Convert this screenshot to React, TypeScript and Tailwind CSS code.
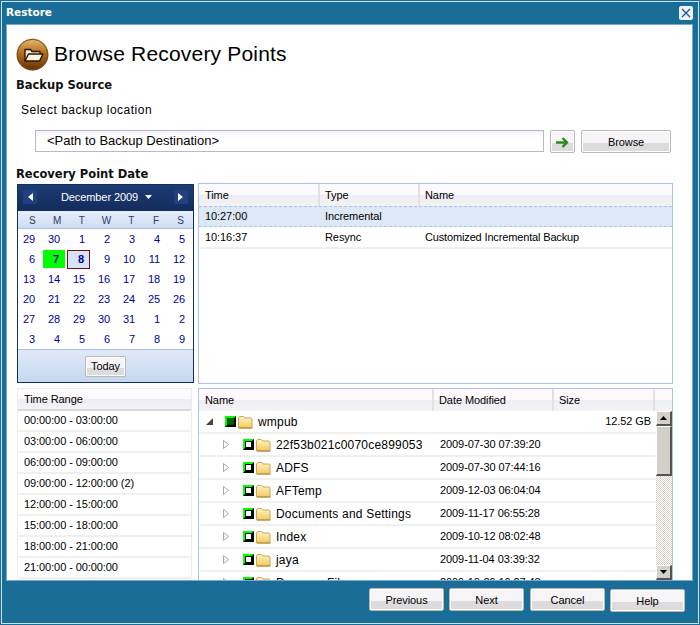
const btn =
  "rounded-[2px] border border-[#b9b9b9] bg-[linear-gradient(to_bottom,#f7f4f7_0,#f7f4f7_58%,#dcdcdc_58%,#dcdcdc_100%)] shadow-[inset_0_0_0_1px_#fff] text-[11px] text-black flex items-center justify-center pt-px"

const calendarDays = [
  [29, 30, 1, 2, 3, 4, 5],
  [6, 7, 8, 9, 10, 11, 12],
  [13, 14, 15, 16, 17, 18, 19],
  [20, 21, 22, 23, 24, 25, 26],
  [27, 28, 29, 30, 31, 1, 2],
  [3, 4, 5, 6, 7, 8, 9],
]

const timeRanges = [
  "00:00:00 - 03:00:00",
  "03:00:00 - 06:00:00",
  "06:00:00 - 09:00:00",
  "09:00:00 - 12:00:00 (2)",
  "12:00:00 - 15:00:00",
  "15:00:00 - 18:00:00",
  "18:00:00 - 21:00:00",
  "21:00:00 - 00:00:00",
]

const files = [
  { name: "22f53b021c0070ce899053", date: "2009-07-30 07:39:20" },
  { name: "ADFS", date: "2009-07-30 07:44:16" },
  { name: "AFTemp", date: "2009-12-03 06:04:04" },
  { name: "Documents and Settings", date: "2009-11-17 06:55:28" },
  { name: "Index", date: "2009-10-12 08:02:48" },
  { name: "jaya", date: "2009-11-04 03:39:32" },
  { name: "Program Files", date: "2009-10-29 10:27:48" },
]

const HeadCell = ({ label, className }: { label: string; className: string }) => (
  <div className={`flex h-full items-center border-r-2 border-[#e2e0e4] pl-[6px] ${className}`}>{label}</div>
)

const headBg = "bg-[linear-gradient(to_bottom,#fdfbfe_0,#fbf9fc_50%,#eeedf1_50%,#f3f2f5_100%)]"

const BrowseIcon = () => (
  <svg width="33" height="33" viewBox="0 0 33 33" className="shrink-0">
    <defs>
      <linearGradient id="orb" x1="0" y1="0" x2="0" y2="1">
        <stop offset="0" stopColor="#e9b877" />
        <stop offset="0.45" stopColor="#b36f1e" />
        <stop offset="1" stopColor="#5f3005" />
      </linearGradient>
    </defs>
    <circle cx="16.5" cy="16.5" r="16" fill="url(#orb)" />
    <circle cx="16.5" cy="16.5" r="15.2" fill="none" stroke="#7c4a12" strokeWidth="1" />
    <path d="M9 23V11.5h5.5l1.5 2h8v3" fill="#f5e9d2" stroke="#2b1603" strokeWidth="1.4" strokeLinejoin="round" />
    <path d="M9 23l3.5-7h14.5l-3.5 7z" fill="#fbf2e0" stroke="#2b1603" strokeWidth="1.4" strokeLinejoin="round" />
  </svg>
)

const Folder = () => (
  <svg width="16" height="14" viewBox="0 0 16 14" className="shrink-0">
    <defs>
      <linearGradient id="fold" x1="0" y1="0" x2="0" y2="1">
        <stop offset="0" stopColor="#fff3c4" />
        <stop offset="1" stopColor="#f5c95a" />
      </linearGradient>
    </defs>
    <path d="M1.5 13V3l1-1.5h4L8 3h6l1 1v9z" fill="url(#fold)" stroke="#c9a65a" strokeWidth="1" />
    <path d="M2 13h13.5" stroke="#a8873f" strokeWidth="1" />
  </svg>
)

const CheckBox = ({ solid }: { solid?: boolean }) => (
  <div className="flex h-[11px] w-[11px] shrink-0 items-center justify-center border-2 border-t-[#00ff00] border-r-black border-b-black border-l-[#00ff00] bg-[#00ff00]">
    <div className={`h-[7px] w-[7px] border ${solid ? "border-[#004d00] bg-[#006400]" : "border-black bg-white"}`} />
  </div>
)

const CalArrow = ({ dir }: { dir: "left" | "right" }) => (
  <div className="flex h-[14px] w-[14px] items-center justify-center rounded-[2px] bg-[#22407f]">
    <svg width="5" height="8" viewBox="0 0 5 8">
      <path d={dir === "left" ? "M5 0v8L0 4z" : "M0 0v8l5-4z"} fill="#fff" />
    </svg>
  </div>
)

const Calendar = () => (
  <div className="flex h-[199px] w-[177px] flex-col border border-[#12305f] text-[11px]">
    <div className="flex h-[26px] items-center justify-between bg-[linear-gradient(to_bottom,#1d3b74,#142c5c)] px-[5px] pb-[2px] text-white">
      <CalArrow dir="left" />
      <div className="flex items-center gap-[7px] pl-[2px]">
        December 2009
        <svg width="7" height="4" viewBox="0 0 7 4"><path d="M0 0h7L3.5 4z" fill="#fff" /></svg>
      </div>
      <CalArrow dir="right" />
    </div>
    <div className="grid h-[18px] grid-cols-7 items-center border-b border-[#a9c0e4] bg-[linear-gradient(to_bottom,#e6eefa,#cfdcf2)] pt-px pl-[2px] text-center text-[10px] text-[#2c3e5c]">
      {["S", "M", "T", "W", "T", "F", "S"].map((d, i) => (
        <div key={i}>{d}</div>
      ))}
    </div>
    <div className="grid flex-1 grid-cols-7 grid-rows-6 bg-white text-[#00009c]">
      {calendarDays.flat().map((d, i) =>
        i === 8 ? (
          <div key={i} className="flex items-center">
            <div className="flex h-[18px] w-[22px] items-center justify-end bg-[#00ff00] pr-[6px] font-bold">{d}</div>
          </div>
        ) : i === 9 ? (
          <div key={i} className="flex items-center">
            <div className="-ml-px flex h-[19px] w-[23px] items-center justify-end border border-[#7b0a0a] bg-[#d7e2f5] pr-[5px] font-bold">{d}</div>
          </div>
        ) : (
          <div key={i} className="flex items-center justify-end pr-[8px]">{d}</div>
        )
      )}
    </div>
    <div className="flex h-[33px] items-center justify-center border-t border-[#a9c0e4] bg-[linear-gradient(to_bottom,#e0e9f9,#c5d8ef)]">
      <div className={`${btn} h-[21px] w-[41px]`}>Today</div>
    </div>
  </div>
)

const FileRow = ({ name, date }: { name: string; date: string }) => (
  <div className="flex h-[23px] shrink-0 items-center border-b-2 border-[#f0f0f0]">
    <div className="flex w-[235px] items-center pl-[24px]">
      <svg width="6" height="9" viewBox="0 0 6 9" className="mr-[14px] shrink-0">
        <path d="M.5.5v8l5-4z" fill="#fff" stroke="#a8a8a8" />
      </svg>
      <CheckBox />
      <div className="ml-px"><Folder /></div>
      <span className="ml-[5px] text-[12px] tracking-[0.2px] whitespace-nowrap">{name}</span>
    </div>
    <div className="pl-[6px]">{date}</div>
  </div>
)

const Scrollbar = () => (
  <div className="flex w-[16px] shrink-0 flex-col bg-[repeating-conic-gradient(#d4d0c8_0_25%,#ffffff_0_50%)] bg-[length:2px_2px]">
    <div className="flex h-[15px] shrink-0 items-center justify-center border-t border-r-2 border-b-2 border-l border-t-white border-r-[#555] border-b-[#555] border-l-white bg-[#d4d0c8]">
      <svg width="7" height="4" viewBox="0 0 7 4"><path d="M0 4h7L3.5 0z" fill="#000" /></svg>
    </div>
    <div className="h-[50px] shrink-0 border-t border-r-2 border-b-2 border-l border-t-white border-r-[#555] border-b-[#555] border-l-white bg-[#d4d0c8]" />
    <div className="flex-1" />
    <div className="flex h-[15px] shrink-0 items-center justify-center border-t border-r-2 border-b-2 border-l border-t-white border-r-[#555] border-b-[#555] border-l-white bg-[#d4d0c8]">
      <svg width="7" height="4" viewBox="0 0 7 4"><path d="M0 0h7L3.5 4z" fill="#000" /></svg>
    </div>
  </div>
)

export default function App() {
  return (
    <div className="h-[625px] w-[700px] bg-[#196d96] p-px text-[11px] tracking-[-0.08px] text-black [font-family:'Liberation_Sans',Arial,sans-serif]">
      <div className="flex h-full w-full flex-col overflow-hidden border border-[#cfe3ee]">
        <div className="flex h-[22px] shrink-0 items-center justify-between pr-[5px] pl-[4px]">
          <span className="text-[10.5px] font-bold tracking-normal text-white [font-family:'DejaVu_Sans',sans-serif]">Restore</span>
          <div className="flex h-[14px] w-[14px] items-center justify-center rounded-[2px] bg-[#eef3fb]">
            <svg width="10" height="10" viewBox="0 0 10 10">
              <path d="M1 1l8 8M9 1l-8 8" stroke="#1f4d93" strokeWidth="1.2" />
            </svg>
          </div>
        </div>

        <div className="mr-[5px] ml-[4px] flex h-[557px] shrink-0 flex-col overflow-hidden border border-[#79a7d9] bg-white pr-[19px] pl-[9px]">
          <div className="mt-[13px] flex h-[33px] shrink-0 items-center gap-[5px]">
            <BrowseIcon />
            <span className="-mt-[2px] text-[21px] leading-none tracking-[0.18px]">Browse Recovery Points</span>
          </div>
          <div className="mt-[6px] text-[11.5px] leading-[16px] font-bold tracking-normal text-[#111] [font-family:'DejaVu_Sans',sans-serif]">Backup Source</div>
          <div className="mt-[9px] ml-[5px] text-[12px] leading-[16px] tracking-[0.5px]">Select backup location</div>

          <div className="mt-[12px] ml-[19px] flex h-[23px] shrink-0 items-start">
            <div className="flex h-[22px] w-[509px] items-center border border-[#b4b9cc] bg-[linear-gradient(to_bottom,#f4f2f8,#ffffff_35%)] pl-[11px] text-[13px] tracking-normal">
              {"<Path to Backup Destination>"}
            </div>
            <div className={`${btn} ml-[6px] h-[23px] w-[25px]`}>
              <svg width="13" height="11" viewBox="0 0 13 11">
                <path d="M0 5.5h10M6.5 1l4.5 4.5L6.5 10" fill="none" stroke="#2b8a1e" strokeWidth="2.4" />
              </svg>
            </div>
            <div className={`${btn} ml-[6px] h-[23px] w-[90px]`}>Browse</div>
          </div>

          <div className="mt-[13px] text-[11.5px] leading-[16px] font-bold tracking-normal text-[#111] [font-family:'DejaVu_Sans',sans-serif]">Recovery Point Date</div>

          <div className="mt-[1px] flex h-[202px] shrink-0 items-start">
            <div className="mt-px ml-px"><Calendar /></div>
            <div className="ml-[4px] flex h-[201px] w-[475px] flex-col border border-[#a9c3ea]">
              <div className={`flex h-[22px] shrink-0 items-center ${headBg}`}>
                <HeadCell label="Time" className="w-[121px]" />
                <HeadCell label="Type" className="w-[100px] !pl-[5px]" />
                <div className="pl-[5px]">Name</div>
              </div>
              <div className="flex h-[21px] shrink-0 items-center border-y border-dashed border-[#a9c3ea] bg-[#dce8f5]">
                <div className="w-[121px] pl-[6px]">10:27:00</div>
                <div className="w-[100px] pl-[5px]">Incremental</div>
              </div>
              <div className="flex h-[22px] shrink-0 items-center border-b-2 border-[#f0eff2]">
                <div className="w-[121px] pl-[6px]">10:16:37</div>
                <div className="w-[100px] pl-[5px]">Resync</div>
                <div className="pl-[5px] tracking-[-0.15px]">Customized Incremental Backup</div>
              </div>
            </div>
          </div>

          <div className="mt-[3px] ml-px flex flex-1 items-start overflow-hidden">
            <div className="flex h-[190px] w-[175px] shrink-0 flex-col border border-[#ececec]">
              <div className={`flex h-[22px] shrink-0 items-center border-b-2 border-[#d8d8da] pl-[6px] ${headBg}`}>Time Range</div>
              {timeRanges.map((t) => (
                <div key={t} className="flex h-[21px] shrink-0 items-center border-b-2 border-[#f0f0f0] pl-[6px]">{t}</div>
              ))}
            </div>
            <div className="ml-[6px] flex h-full w-[475px] flex-col overflow-hidden border border-b-0 border-[#a9c3ea]">
              <div className={`flex h-[22px] shrink-0 items-center ${headBg}`}>
                <HeadCell label="Name" className="w-[235px]" />
                <HeadCell label="Date Modified" className="w-[120px] !pl-[5px]" />
                <HeadCell label="Size" className="w-[101px] !pl-[5px]" />
              </div>
              <div className="flex min-h-0 flex-1">
                <div className="w-[457px] shrink-0 overflow-hidden">
                  <div className="flex h-[23px] items-center border-b-2 border-[#f0f0f0]">
                    <div className="flex w-[355px] items-center pl-[7px]">
                      <svg width="7" height="7" viewBox="0 0 7 7" className="mr-[12px] shrink-0">
                        <path d="M7 0v7H0z" fill="#444" />
                      </svg>
                      <CheckBox solid />
                      <div className="ml-px"><Folder /></div>
                      <span className="ml-[5px] text-[12px] tracking-[0.2px]">wmpub</span>
                    </div>
                    <div className="w-[97px] text-right">12.52 GB</div>
                  </div>
                  {files.map((f) => (
                    <FileRow key={f.name} {...f} />
                  ))}
                </div>
                <Scrollbar />
              </div>
            </div>
          </div>
        </div>

        <div className="flex flex-1 items-start pt-[7px] pl-[367px]">
          <div className={`${btn} h-[23px] w-[75px]`}>Previous</div>
          <div className={`${btn} ml-[5px] h-[23px] w-[75px]`}>Next</div>
          <div className={`${btn} ml-[6px] h-[23px] w-[75px]`}>Cancel</div>
          <div className={`${btn} mt-px ml-[5px] h-[23px] w-[75px]`}>Help</div>
        </div>
      </div>
    </div>
  )
}
